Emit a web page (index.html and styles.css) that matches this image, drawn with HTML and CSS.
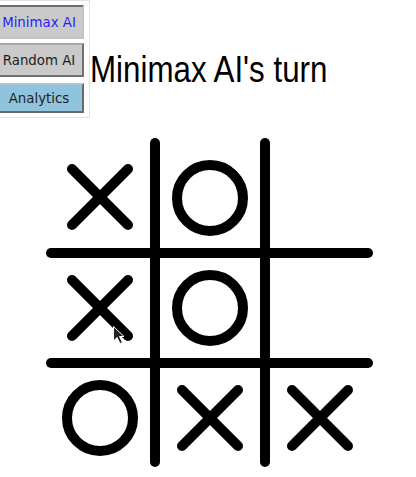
FILE: index.html
```html
<!DOCTYPE html>
<html>
<head>
<meta charset="utf-8">
<link rel="stylesheet" href="styles.css">
</head>
<body>
<div class="top">
  <div class="panel">
    <button class="btn active">Minimax AI</button>
    <button class="btn second">Random AI</button>
    <button class="btn analytics">Analytics</button>
  </div>
  <h1 class="status">Minimax AI's turn</h1>
</div>
<div class="board-wrap">
  <svg class="board" width="340" height="340" viewBox="0 0 340 340">
    <g stroke="#000" stroke-width="10" stroke-linecap="round" fill="none">
      <line x1="115" y1="10" x2="115" y2="329"/>
      <line x1="225" y1="10" x2="225" y2="329"/>
      <line x1="11" y1="120" x2="328" y2="120"/>
      <line x1="11" y1="230" x2="328" y2="230"/>
      <path d="M32 36 L88 92 M88 36 L32 92"/>
      <circle cx="170" cy="65" r="33"/>
      <path d="M32 147 L88 203 M88 147 L32 203"/>
      <circle cx="170" cy="175" r="33"/>
      <circle cx="60" cy="285" r="33"/>
      <path d="M142 257 L198 313 M198 257 L142 313"/>
      <path d="M252 257 L308 313 M308 257 L252 313"/>
    </g>
    <path class="cursor" d="M73.5 193.5 L73.5 208 L77 204.5 L80 210.5 L82.5 209.5 L79.5 203.5 L84 203.5 Z" fill="#222" stroke="#fff" stroke-width="1"/>
  </svg>
</div>
</body>
</html>
```

FILE: styles.css
```css
html, body {
  margin: 0;
  padding: 0;
  background: #fff;
  overflow: hidden;
}

.top {
  display: flex;
  align-items: flex-start;
}

.panel {
  display: flex;
  flex-direction: column;
  margin-left: -8px;
  padding: 4px 5px 4px 1px;
  border: 1px solid #e2e2e2;
}

.btn {
  width: 90px;
  height: 34px;
  padding: 0 6px;
  margin: 0;
  font-family: "DejaVu Sans", sans-serif;
  font-size: 13.333px;
  color: #1e1e1e;
  background: #cacaca;
  border: 2px solid;
  border-color: #a8a8a8 #707070 #707070 #a8a8a8;
  text-align: center;
}

.btn.active {
  color: #1f1fff;
  border-color: #6e6e6e #c4c4c4 #c4c4c4 #6e6e6e;
}

.btn.second {
  margin-top: 4px;
}

.btn.analytics {
  margin-top: 6px;
  height: 30px;
  background: #90c3dc;
  border-color: #a6c9da #6a6a6a #6a6a6a #a6c9da;
}

.status {
  margin: 47px 0 0 0;
  font-family: "Liberation Sans", Arial, sans-serif;
  font-size: 37.5px;
  line-height: 44px;
  font-weight: normal;
  color: #000;
  white-space: nowrap;
  transform: scaleX(0.835);
  transform-origin: 0 0;
}

.board-wrap {
  margin: 15px 0 0 40px;
}

.board {
  display: block;
}
```
